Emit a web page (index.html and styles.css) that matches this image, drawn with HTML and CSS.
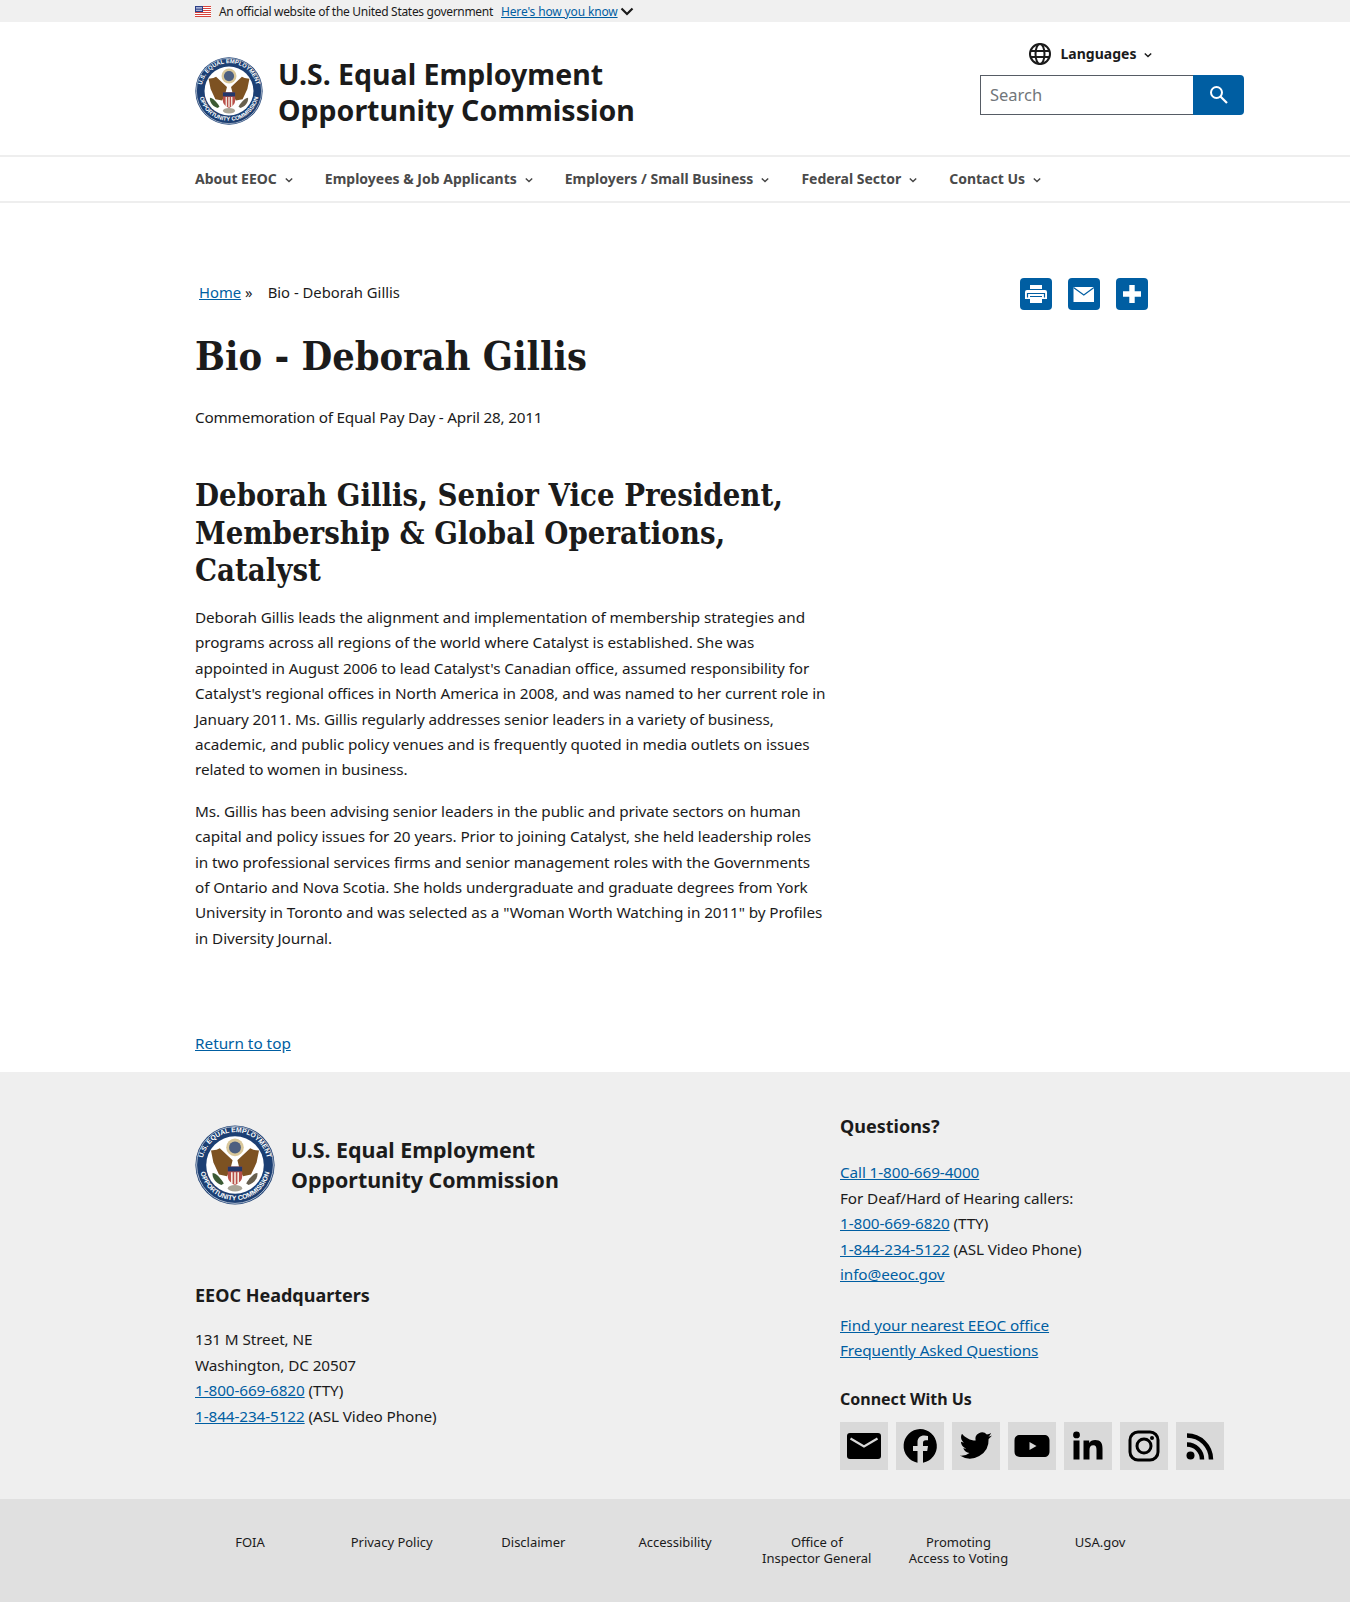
FILE: index.html
```html
<!DOCTYPE html>
<html lang="en">
<head>
<meta charset="utf-8">
<title>Bio - Deborah Gillis</title>
<link rel="stylesheet" href="styles.css">
</head>
<body>
<svg class="defs" width="0" height="0" aria-hidden="true">
  <defs>
    <symbol id="seal" viewBox="0 0 100 100">
      <circle cx="50" cy="50" r="49.500" fill="#1c3f73"/>
      <circle cx="50" cy="50" r="36" fill="#fff"/>
      <circle cx="50" cy="50" r="48" fill="none" stroke="#fff" stroke-width=".8"/>
      <path id="sealTop" d="M9 50a41 41 0 0 1 82 0" fill="none"/>
      <path id="sealBot" d="M6 50a44 44 0 0 0 88 0" fill="none"/>
      <text class="seal-text"><textPath href="#sealTop" startOffset="50%" text-anchor="middle">U.S. EQUAL EMPLOYMENT</textPath></text>
      <text class="seal-text"><textPath href="#sealBot" startOffset="50%" text-anchor="middle">OPPORTUNITY COMMISSION</textPath></text>
      <circle cx="50" cy="28" r="11" fill="#d9c79a"/>
      <circle cx="50" cy="28" r="7.500" fill="#4d5f80"/>
      <path d="M47 44 31 29l-4 2-7 1 3 15 7 15 10 2 4-8z" fill="#7d5222"/>
      <path d="M53 44l16-15 4 2 7 1-3 15-7 15-10 2-4-8z" fill="#7d5222"/>
      <path d="M41 52h18v12c0 6-5 9-9 11-4-2-9-5-9-11z" fill="#b9504a"/>
      <path d="M41 52h18v6H41z" fill="#22386b"/>
      <path d="M45 59h2v14h-2zm4 0h2v15h-2zm4 0h2v14h-2z" fill="#f4eee4"/>
      <path d="M22 60c4 0 10 6 14 13l-3 2c-6-2-12-8-11-15z" fill="#3b5a34"/>
      <path d="M78 60c-4 0-10 6-14 13l3 2c6-2 12-8 11-15z" fill="#675f4e"/>
      <ellipse cx="50" cy="79" rx="9" ry="4" fill="#a9a496"/>
    </symbol>
  </defs>
</svg>

<div class="gov-banner">
  <div class="wrap gov-inner">
    <svg class="flag" viewBox="0 0 16 11" width="16" height="11" aria-hidden="true">
      <path fill="#fff" d="M0 0h16v11H0z"/>
      <path fill="#d8443c" d="M0 0h16v1H0zm0 2h16v1H0zm0 2h16v1H0zm0 2h16v1H0zm0 2h16v1H0zm0 2h16v1H0z"/>
      <path fill="#2b3f86" d="M0 0h8v6H0z"/>
      <path fill="#cfd6ee" d="M1 1h6v.7H1zm0 1.600h6v.7H1zm0 1.600h6v.7H1z"/>
    </svg>
    <span class="gov-text">An official website of the United States government</span>
    <a class="gov-link" href="#">Here's how you know</a>
    <svg class="gov-chev" viewBox="0 0 14 9" width="14" height="9" aria-hidden="true"><path d="M1.500 1.500 7 7l5.500-5.500" fill="none" stroke="#1b1b1b" stroke-width="2.200"/></svg>
  </div>
</div>

<header class="masthead">
  <div class="wrap masthead-inner">
    <a class="brand" href="#">
      <svg class="seal" aria-hidden="true"><use href="#seal"/></svg>
      <span class="brand-name">U.S. Equal Employment<br>Opportunity Commission</span>
    </a>
    <div class="tools">
      <div class="lang">
        <svg class="globe" viewBox="0 0 24 24" width="24" height="24" aria-hidden="true">
          <g fill="none" stroke="#1b1b1b" stroke-width="2"><circle cx="12" cy="12" r="10"/><ellipse cx="12" cy="12" rx="4.500" ry="10"/><path d="M2.500 9h19M2.500 15h19"/></g>
        </svg>
        <span class="lang-label">Languages</span>
        <svg class="chev" viewBox="0 0 10 7" width="8" height="6" aria-hidden="true"><path d="M1 1.500 5 5.500l4-4" fill="none" stroke="#1b1b1b" stroke-width="1.800"/></svg>
      </div>
      <form class="search">
        <div class="search-input">Search</div>
        <button class="search-btn" type="button" aria-label="Search">
          <svg viewBox="0 0 24 24" width="24" height="24" aria-hidden="true"><circle cx="9.500" cy="9.500" r="5.500" fill="none" stroke="#fff" stroke-width="2"/><path d="M13.500 13.500 20 20" fill="none" stroke="#fff" stroke-width="2.200"/></svg>
        </button>
      </form>
    </div>
  </div>
</header>

<nav class="mainnav">
  <ul class="wrap nav-list">
    <li class="nav-item">About EEOC<svg class="chev" viewBox="0 0 10 7" width="8" height="6" aria-hidden="true"><path d="M1 1.500 5 5.500l4-4" fill="none" stroke="#454545" stroke-width="1.800"/></svg></li>
    <li class="nav-item">Employees &amp; Job Applicants<svg class="chev" viewBox="0 0 10 7" width="8" height="6" aria-hidden="true"><path d="M1 1.500 5 5.500l4-4" fill="none" stroke="#454545" stroke-width="1.800"/></svg></li>
    <li class="nav-item">Employers / Small Business<svg class="chev" viewBox="0 0 10 7" width="8" height="6" aria-hidden="true"><path d="M1 1.500 5 5.500l4-4" fill="none" stroke="#454545" stroke-width="1.800"/></svg></li>
    <li class="nav-item">Federal Sector<svg class="chev" viewBox="0 0 10 7" width="8" height="6" aria-hidden="true"><path d="M1 1.500 5 5.500l4-4" fill="none" stroke="#454545" stroke-width="1.800"/></svg></li>
    <li class="nav-item">Contact Us<svg class="chev" viewBox="0 0 10 7" width="8" height="6" aria-hidden="true"><path d="M1 1.500 5 5.500l4-4" fill="none" stroke="#454545" stroke-width="1.800"/></svg></li>
  </ul>
</nav>

<main class="wrap content">
  <div class="crumb-row">
    <div class="crumbs"><a href="#">Home</a><span class="crumb-sep">»</span><span>Bio - Deborah Gillis</span></div>
    <div class="share">
      <a class="share-btn" href="#" aria-label="Print"><svg viewBox="0 0 32 32" width="32" height="32" aria-hidden="true"><path fill="#fff" d="M10 7h12v4H10zM7 12h18a2 2 0 0 1 2 2v7h-5v4H10v-4H5v-7a2 2 0 0 1 2-2z"/><path fill="none" stroke="#005ea2" stroke-width="1.200" d="M7.500 19.500v-4h17v4M10 18.500h12"/></svg></a>
      <a class="share-btn" href="#" aria-label="Email"><svg viewBox="0 0 32 32" width="32" height="32" aria-hidden="true"><path fill="#fff" d="M5.500 9h20.500v15H5.500z"/><path fill="none" stroke="#005ea2" stroke-width="1.200" d="M5.500 9.500 15.800 17 26 9.500"/></svg></a>
      <a class="share-btn" href="#" aria-label="Share"><svg viewBox="0 0 32 32" width="32" height="32" aria-hidden="true"><path fill="#fff" d="M13.300 7h5.400v6.300H25v5.400h-6.300V25h-5.400v-6.300H7v-5.400h6.300z"/></svg></a>
    </div>
  </div>
  <h1 class="page-title">Bio - Deborah Gillis</h1>
  <p class="subtitle">Commemoration of Equal Pay Day - April 28, 2011</p>
  <article class="bio">
    <h2 class="bio-title">Deborah Gillis, Senior Vice President, Membership &amp; Global Operations, Catalyst</h2>
    <p>Deborah Gillis leads the alignment and implementation of membership strategies and programs across all regions of the world where Catalyst is established. She was appointed in August 2006 to lead Catalyst's Canadian office, assumed responsibility for Catalyst's regional offices in North America in 2008, and was named to her current role in January 2011. Ms. Gillis regularly addresses senior leaders in a variety of business, academic, and public policy venues and is frequently quoted in media outlets on issues related to women in business.</p>
    <p>Ms. Gillis has been advising senior leaders in the public and private sectors on human capital and policy issues for 20 years. Prior to joining Catalyst, she held leadership roles in two professional services firms and senior management roles with the Governments of Ontario and Nova Scotia. She holds undergraduate and graduate degrees from York University in Toronto and was selected as a "Woman Worth Watching in 2011" by Profiles in Diversity Journal.</p>
  </article>
  <a class="top-link" href="#">Return to top</a>
</main>

<footer class="footer">
  <div class="wrap footer-main">
    <div class="footer-left">
      <a class="footer-brand" href="#">
        <svg class="footer-seal" aria-hidden="true"><use href="#seal"/></svg>
        <span class="footer-name">U.S. Equal Employment<br>Opportunity Commission</span>
      </a>
      <h3 class="footer-h">EEOC Headquarters</h3>
      <p class="footer-p">131 M Street, NE<br>Washington, DC 20507<br><a href="#">1-800-669-6820</a> (TTY)<br><a href="#">1-844-234-5122</a> (ASL Video Phone)</p>
    </div>
    <div class="footer-right">
      <h3 class="footer-h q">Questions?</h3>
      <p class="footer-p"><a href="#">Call 1-800-669-4000</a><br>For Deaf/Hard of Hearing callers:<br><a href="#">1-800-669-6820</a> (TTY)<br><a href="#">1-844-234-5122</a> (ASL Video Phone)<br><a href="#">info@eeoc.gov</a></p>
      <p class="footer-p gap"><a href="#">Find your nearest EEOC office</a><br><a href="#">Frequently Asked Questions</a></p>
      <h4 class="connect">Connect With Us</h4>
      <div class="social">
        <a class="soc" href="#" aria-label="Email"><svg viewBox="0 0 48 48" width="48" height="48" aria-hidden="true"><path d="M10 11h28a3 3 0 0 1 3 3v20a3 3 0 0 1-3 3H10a3 3 0 0 1-3-3V14a3 3 0 0 1 3-3z" fill="#000"/><path d="M10.500 16.500 24 24.500l13.500-8" fill="none" stroke="#d9d9d9" stroke-width="2.200"/></svg></a>
        <a class="soc" href="#" aria-label="Facebook"><svg viewBox="0 0 48 48" width="48" height="48" aria-hidden="true"><path d="M24 7a17 17 0 0 1 3 33.700V29h4.200l.8-5h-5v-3c0-1.700.8-2.700 2.800-2.700H32V14c-1-.2-2.400-.4-3.800-.4-4 0-6.700 2.400-6.700 6.800V24h-4.500v5h4.500v11.700A17 17 0 0 1 24 7z" fill="#000"/></svg></a>
        <a class="soc" href="#" aria-label="Twitter"><svg viewBox="0 0 48 48" width="48" height="48" aria-hidden="true"><path d="M40 13.600c-1.200.5-2.400.9-3.800 1 1.400-.8 2.400-2.100 2.900-3.600-1.300.8-2.700 1.300-4.200 1.600a6.600 6.600 0 0 0-11.300 6c-5.500-.3-10.400-2.900-13.600-6.900-1.800 3-.9 6.900 2 8.800-1 0-2-.3-3-.8 0 3.200 2.300 5.900 5.300 6.500-1 .3-2 .3-3 .1.800 2.600 3.300 4.500 6.200 4.600a13.200 13.200 0 0 1-9.700 2.700 18.700 18.700 0 0 0 28.800-16.600c1.300-.9 2.400-2.100 3.400-3.400z" fill="#000"/></svg></a>
        <a class="soc" href="#" aria-label="YouTube"><svg viewBox="0 0 48 48" width="48" height="48" aria-hidden="true"><path d="M12 13h24c3.500 0 5.500 2 5.500 5.500v11c0 3.500-2 5.500-5.500 5.500H12c-3.500 0-5.500-2-5.500-5.500v-11C6.500 15 8.500 13 12 13zm9.500 7v8l7-4z" fill="#000" fill-rule="evenodd"/></svg></a>
        <a class="soc" href="#" aria-label="LinkedIn"><svg viewBox="0 0 48 48" width="48" height="48" aria-hidden="true"><path d="M9.500 18.500h6v19h-6zM12.500 9.500a3.400 3.400 0 1 1 0 6.800 3.400 3.400 0 0 1 0-6.800zM19.500 18.500h5.700v2.600c1-1.800 3-3.100 6-3.100 5.500 0 7.300 3.400 7.300 8.700v10.800h-6v-9.600c0-2.600-.6-4.600-3.200-4.600-2.700 0-3.800 2-3.800 4.600v9.600h-6z" fill="#000"/></svg></a>
        <a class="soc" href="#" aria-label="Instagram"><svg viewBox="0 0 48 48" width="48" height="48" aria-hidden="true"><g fill="none" stroke="#000" stroke-width="3"><rect x="10" y="10" width="28" height="28" rx="8"/><circle cx="24" cy="24" r="7"/></g><circle cx="32" cy="16" r="2" fill="#000"/></svg></a>
        <a class="soc" href="#" aria-label="RSS"><svg viewBox="0 0 48 48" width="48" height="48" aria-hidden="true"><circle cx="14.500" cy="33.500" r="4" fill="#000"/><g fill="none" stroke="#000" stroke-width="4.500"><path d="M11 22.500A15 15 0 0 1 26 37.500"/><path d="M11 13.500A24 24 0 0 1 35 37.500"/></g></svg></a>
      </div>
    </div>
  </div>
  <div class="footer-links">
    <ul class="wrap link-grid">
      <li class="link-cell">FOIA</li>
      <li class="link-cell">Privacy Policy</li>
      <li class="link-cell">Disclaimer</li>
      <li class="link-cell">Accessibility</li>
      <li class="link-cell">Office of<br>Inspector General</li>
      <li class="link-cell">Promoting<br>Access to Voting</li>
      <li class="link-cell">USA.gov</li>
    </ul>
  </div>
</footer>
</body>
</html>
```

FILE: styles.css
```css
* { box-sizing: border-box; }
html, body { margin: 0; padding: 0; }
body {
  font-family: "Noto Sans", "Lato", sans-serif;
  font-size: 15.300px;
  line-height: 25.400px;
  color: #1b1b1b;
  background: #fff;
}
a { color: #005ea2; }
ul { list-style: none; margin: 0; padding: 0; }
.defs { position: absolute; }
.seal-text { font: 700 8.500px "Liberation Sans", sans-serif; fill: #fff; }
.wrap { width: 1048px; margin-left: 195px; }

.gov-banner { background: #f0f0f0; height: 22px; }
.gov-inner { display: flex; align-items: center; height: 22px; padding-top: 1px; font-size: 12px; line-height: 21px; }
.flag { margin-right: 8px; }
.gov-text { margin-right: 8px; letter-spacing: -0.3px; }
.gov-link { letter-spacing: -0.15px; }
.gov-chev { margin-left: 2px; }

.masthead { height: 133px; }
.masthead-inner { display: flex; justify-content: space-between; }
.brand { display: flex; align-items: center; text-decoration: none; color: #1b1b1b; margin-top: 35px; height: 68px; }
.seal { width: 68px; height: 68px; margin-right: 15px; }
.brand-name { font-size: 28.500px; line-height: 36px; font-weight: 700; padding-top: 1px; }
.tools { width: 264px; margin-right: -1px; display: flex; flex-direction: column; align-items: center; padding-top: 20px; }
.lang { display: flex; align-items: center; height: 24px; font-weight: 700; font-size: 14px; margin-bottom: 9px; margin-right: 44px; }
.globe { margin-right: 9px; }
.search { display: flex; width: 264px; height: 40px; }
.search-input { flex: 1; border: 1px solid #565c65; border-right: 0; padding: 0 9px; line-height: 38px; font-size: 16.500px; color: #71767a; }
.search-btn { width: 51px; background: #005ea2; border: 0; border-radius: 0 4px 4px 0; padding: 0; display: flex; align-items: center; justify-content: center; }

.mainnav { height: 48px; border-top: 2px solid #eee; border-bottom: 2px solid #eee; }
.nav-list { display: flex; height: 44px; align-items: center; gap: 32px; }
.nav-item { font-weight: 700; font-size: 14px; color: #4a4a4a; display: flex; align-items: center; }
.chev { margin-left: 8px; margin-top: 2px; }

.content { padding-top: 76px; }
.crumb-row { display: flex; justify-content: space-between; height: 32px; padding-right: 95px; }
.crumbs { padding-left: 4px; font-size: 14.800px; line-height: 26px; }
.crumb-sep { margin: 0 15px 0 4px; }
.share { display: flex; gap: 16px; margin-top: -1px; }
.share-btn { width: 32px; height: 32px; background: #005ea2; border-radius: 4px; display: block; }
.page-title { font-family: "DejaVu Serif Condensed", "DejaVu Serif", serif; font-weight: 700; font-size: 39.400px; line-height: 46px; margin: 22px 0 0; color: #1b1b1b; }
.subtitle { margin: 26px 0 0; letter-spacing: -0.2px; }
.bio { width: 632px; margin-top: 47px; }
.bio-title { font-family: "DejaVu Serif Condensed", "DejaVu Serif", serif; font-weight: 700; font-size: 30.800px; line-height: 37.200px; margin: 0; }
.bio p { margin: 16px 0 0; letter-spacing: -0.1px; }
.top-link { display: block; margin-top: 80px; height: 41px; }

.footer { background: #efefef; }
.footer-main { display: flex; height: 427px; padding-top: 53px; }
.footer-left { width: 645px; }
.footer-brand { display: flex; align-items: center; text-decoration: none; color: #1b1b1b; height: 80px; }
.footer-seal { width: 80px; height: 80px; margin-right: 16px; }
.footer-name { font-size: 21.400px; line-height: 30px; font-weight: 700; }
.footer-h { font-size: 18px; line-height: 26px; margin: 0; font-weight: 700; }
.footer-left .footer-h { margin-top: 77px; }
.footer-right { width: 403px; margin-top: -12px; }
.footer-p { margin: 19px 0 0; letter-spacing: -0.1px; }
.footer-right .footer-h + .footer-p { margin-top: 21px; }
.footer-p.gap { margin-top: 25.400px; }
.connect { font-size: 16px; line-height: 24px; margin: 23px 0 0; font-weight: 700; }
.social { display: flex; gap: 8px; margin-top: 11px; }
.soc { width: 48px; height: 48px; background: #d9d9d9; display: block; }
.footer-links { background: #e0e0e0; height: 103px; padding-top: 36px; }
.link-grid { display: flex; }
.link-cell { width: 110px; margin-right: 31.700px; text-align: center; font-size: 13px; line-height: 15.500px; }
```
